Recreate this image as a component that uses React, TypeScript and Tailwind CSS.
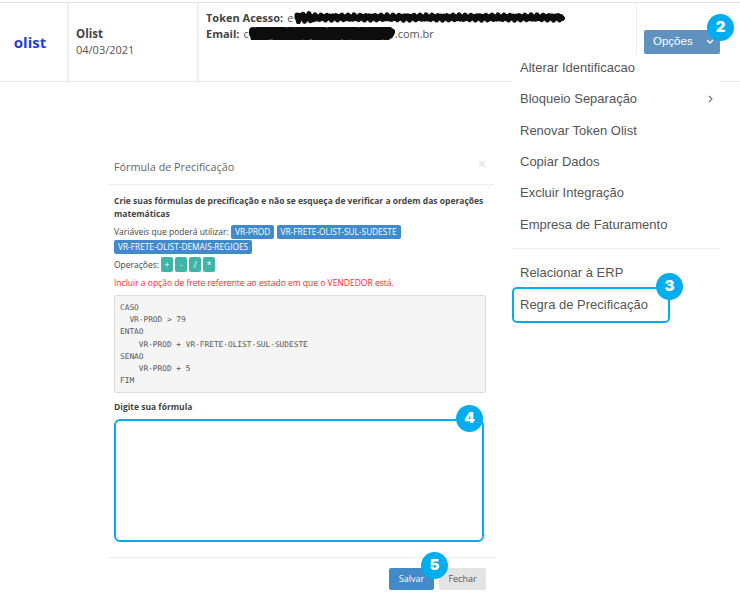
import React from "react";

const open = "font-['Open_Sans',sans-serif]";

function Badge({ n, className }: { n: string; className: string }) {
  return (
    <div className={`absolute z-20 flex h-[27px] w-[27px] items-center justify-center rounded-full bg-[#00aeef] font-['Inter',sans-serif] text-[15px] font-black text-white ${className}`}>
      {n}
    </div>
  );
}

function zigzag(w: number, h: number, lead: number) {
  let d = `M4 ${h / 2}`;
  for (let x = 4, i = 0; x < w - 3; x += 1.5, i++) {
    const amp = x < lead ? 0.32 : 0.2;
    const y = h / 2 + (i % 2 ? 1 : -1) * h * amp * (0.6 + 0.4 * Math.sin(i * 1.7));
    d += ` L${x} ${y.toFixed(1)}`;
  }
  return d;
}

function Scribble({ w, h, lead, width }: { w: number; h: number; lead: number; width: number }) {
  return (
    <svg width={w} height={h} viewBox={`0 0 ${w} ${h}`} className="block shrink-0">
      <path d={zigzag(w, h, lead)} fill="none" stroke="#0d0d0d" strokeWidth={width} strokeLinecap="round" strokeLinejoin="round" />
    </svg>
  );
}

function MenuItem({ label, arrow, kind }: { label: string; arrow?: boolean; kind?: "first" | "short" | "inset" }) {
  const size = kind === "first" ? "h-[28.3px] pb-[2px] pl-2" : kind === "short" ? "h-[30px] pt-[1px] pl-2" : kind === "inset" ? "h-[31.33px] pl-[6px]" : "h-[31.33px] pl-2";
  return (
    <div className={`flex items-center justify-between pr-[6px] font-['Liberation_Sans',sans-serif] text-[13px] text-[#555] ${size}`}>
      <span>{label}</span>
      {arrow && (
        <svg width="6" height="8" viewBox="0 0 6 8" fill="none" stroke="#777" strokeWidth="1.2">
          <path d="M1 1l3 3-3 3" />
        </svg>
      )}
    </div>
  );
}

function Tag({ children }: { children: React.ReactNode }) {
  return <span className="inline-block rounded-[2px] bg-[#428bca] px-1 py-[1px] text-[8.3px] leading-[12px] text-white">{children}</span>;
}

function Op({ children }: { children: React.ReactNode }) {
  return <span className="flex h-[15px] w-[12px] items-center justify-center rounded-[2px] bg-[#3fb5a8] text-[8.5px] text-white">{children}</span>;
}

export default function App() {
  return (
    <div className={`relative h-[597px] w-[740px] overflow-hidden bg-white ${open}`}>
      <div className="mt-[2px] flex h-[80px] border-y border-t-[#dfe3ee] border-b-[#e9e9e9]">
        <div className="flex w-[69px] items-center justify-center border-r-[2px] border-[#eeeeee] pr-[7px] text-[15px] font-bold text-[#1f3fd6]">
          olist
        </div>
        <div className="flex w-[130px] flex-col justify-center border-r-[2px] border-[#eeeeee] pl-[7px] text-[11px] leading-[16.5px] text-[#555]">
          <b className="text-[11.5px] text-[#444]">Olist</b>
          <span>04/03/2021</span>
        </div>
        <div className="w-[438px] border-r border-[#eeeeee] pl-[7px] pt-[7px] text-[11px] leading-[15.5px] text-[#555]">
          <div className="flex items-center whitespace-nowrap">
            <b className="text-[#444]">Token Acesso:</b>
            <span className="ml-1">e</span>
            <Scribble w={274} h={13} lead={22} width={5} />
          </div>
          <div className="flex items-center whitespace-nowrap">
            <b className="text-[#444]">Email:</b>
            <span className="ml-1">c</span>
            <Scribble w={146} h={13} lead={146} width={8} />
            <span>.com.br</span>
          </div>
        </div>
        <div className="flex-1 pl-[7px] pt-[27px]">
          <div className="flex h-[24px] w-[76px] items-center justify-between rounded-[2px] bg-[#5f92be] pl-[9px] pr-[6px] font-['Liberation_Sans',sans-serif] text-[11.5px] text-white">
            <span>Opções</span>
            <svg width="8" height="6" viewBox="0 0 8 6" fill="none" stroke="white" strokeWidth="1.3">
              <path d="M1 1l3 3 3-3" />
            </svg>
          </div>
        </div>
      </div>

      <Badge n="2" className="left-[707px] top-[14px]" />

      <div className="absolute left-[512px] top-[55px] z-10 w-[208px] bg-white">
        <MenuItem label="Alterar Identificacao" kind="first" />
        <MenuItem label="Bloqueio Separação" arrow />
        <MenuItem label="Renovar Token Olist" />
        <MenuItem label="Copiar Dados" />
        <MenuItem label="Excluir Integração" />
        <MenuItem label="Empresa de Faturamento" />
        <div className="mb-[8px] mt-[8px] border-t border-[#eeeeee]" />
        <MenuItem label="Relacionar à ERP" kind="short" />
        <div className="flex h-[36px] w-[158px] items-center rounded-[5px] border-[2px] border-[#00aeef]">
          <MenuItem label="Regra de Precificação" kind="inset" />
        </div>
      </div>
      <Badge n="3" className="left-[656px] top-[273px]" />

      <div className="absolute left-[108px] top-[150px] w-[386px]">
        <div className="flex h-[35px] items-center justify-between border-b border-[#eeeeee] px-[6px] text-[10.8px] text-[#666]">
          <span>Fórmula de Precificação</span>
          <span className="-mt-[8px] pr-[2px] text-[14px] font-light text-[#ccc]">×</span>
        </div>
        <div className="pl-[6px] pr-[8px] pt-[9px] text-[8.5px] leading-[13px] text-[#444]">
          <div className="font-bold">Crie suas fórmulas de precificação e não se esqueça de verificar a ordem das operações matemáticas</div>
          <div className="mt-[4px] leading-[15px]">
            Variáveis que poderá utilizar: <Tag>VR-PROD</Tag> <Tag>VR-FRETE-OLIST-SUL-SUDESTE</Tag> <Tag>VR-FRETE-OLIST-DEMAIS-REGIOES</Tag>
          </div>
          <div className="mt-[3px] flex items-center gap-[2px]">
            <span>Operações:</span>
            <Op>+</Op>
            <Op>-</Op>
            <Op>/</Op>
            <Op>*</Op>
          </div>
          <div className="mt-[4px] text-[#ff2a2a]">Incluir a opção de frete referente ao estado em que o VENDEDOR está.</div>
          <pre className="mt-[6px] h-[98px] whitespace-pre rounded-[2px] border border-[#ddd] bg-[#f5f5f5] px-[5px] pb-[3px] pt-[6px] font-['DejaVu_Sans_Mono',monospace] text-[7.8px] leading-[12.2px] text-[#555]">{`CASO
  VR-PROD > 79
ENTAO
    VR-PROD + VR-FRETE-OLIST-SUL-SUDESTE
SENAO
    VR-PROD + 5
FIM`}</pre>
          <div className="mt-[7px] font-bold">Digite sua fórmula</div>
          <div className="relative mt-[6px] h-[123px] w-[370px] rounded-[6px] border-[2px] border-[#00aeef] bg-white">
            <svg width="5" height="5" viewBox="0 0 5 5" fill="none" stroke="#aaa" strokeWidth="0.7" className="absolute -right-[4px] bottom-[1px]">
              <path d="M0 5L5 0M2.5 5L5 2.5" />
            </svg>
          </div>
        </div>
        <div className="mt-[15px] flex justify-end gap-[5px] border-t border-[#eeeeee] px-[8px] pt-[10px] text-[9px]">
          <div className="flex h-[22px] w-[45px] items-center justify-center rounded-[2px] bg-[#428bca] text-white">Salvar</div>
          <div className="flex h-[22px] w-[47px] items-center justify-center rounded-[2px] bg-[#e4e4e4] text-[#555]">Fechar</div>
        </div>
      </div>
      <Badge n="4" className="left-[456px] top-[405px]" />
      <Badge n="5" className="left-[421px] top-[552px]" />
    </div>
  );
}
